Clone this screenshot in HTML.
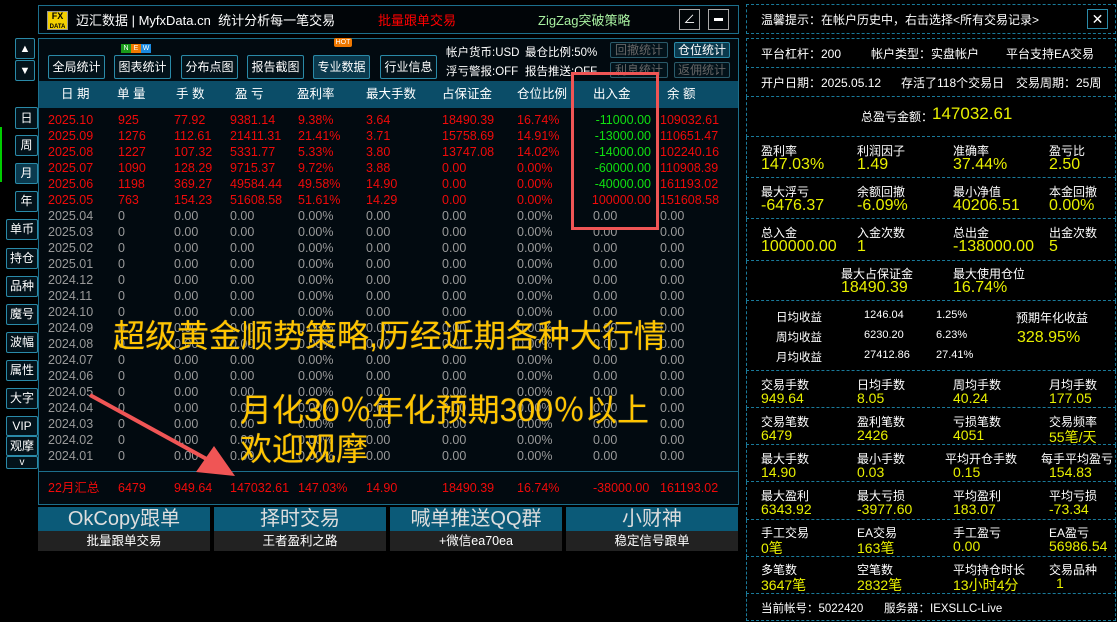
<!DOCTYPE html>
<html><head><meta charset="utf-8">
<style>
*{margin:0;padding:0;box-sizing:border-box}
body{width:1117px;height:622px;background:#000;position:relative;overflow:hidden;font-family:"Liberation Sans","Noto Sans CJK SC",sans-serif;color:#fff}
.a{position:absolute;white-space:nowrap}
.bx{position:absolute;border:1px solid #1c6f8c;background:#020a10}
.btn{position:absolute;border:1px solid #2a8aa8;background:#03121a;color:#fff;font-size:12px;text-align:center;border-radius:2px}
.sb{position:absolute;border:1px solid #2a8aa8;background:#03121a;color:#fff;font-size:12px;text-align:center;border-radius:2px}
.r{position:absolute;left:0;width:700px;height:16px;font-size:12.5px;line-height:16px}
.r span{position:absolute}
.red{color:#f00a0a}.gr{color:#9a9a9a}.grn{color:#10e010}
.c1{left:10px}.c2{left:80px}.c3{left:136px}.c4{left:192px}.c5{left:260px}.c6{left:328px}.c7{left:404px}.c8{left:479px}.c9{right:87px}.c9g{left:555px}.c10{left:622px}
.rp{position:absolute;left:746px;width:370px;border-left:1px dashed #1a7a9a;border-right:1px dashed #1a7a9a;border-bottom:1px dashed #1a7a9a}
.lb{position:absolute;font-size:12px;color:#fff}
.vl{position:absolute;font-size:16px;color:#e8f000}
.bb{position:absolute;top:507px;width:172px;height:44px}
.bb .t{height:24px;background:#0b5a78;color:#ddd;font-size:20px;line-height:24px;text-align:center}
.bb .s{height:20px;background:#222;color:#fff;font-size:12.5px;line-height:20px;text-align:center}
.ov{position:absolute;color:#ffc400;white-space:nowrap;text-shadow:0 0 1px #664}
</style></head><body>

<!-- top bar -->
<div class="bx" style="left:38px;top:5px;width:701px;height:29px;background:#010508"></div>
<div class="a" style="left:47px;top:11px;width:21px;height:19px;background:#f4d000;border:1px solid #999;color:#000;font-size:9px;font-weight:bold;line-height:9px;text-align:center">FX<br><span style="font-size:6px">DATA</span></div>
<div class="a" style="left:76px;top:10px;font-size:13px">迈汇数据 | MyfxData.cn&nbsp; 统计分析每一笔交易</div>
<div class="a" style="left:378px;top:10px;font-size:13px;color:#f00">批量跟单交易</div>
<div class="a" style="left:538px;top:10px;font-size:13px;color:#a8f0a0">ZigZag突破策略</div>
<div class="a" style="left:679px;top:9px;width:21px;height:21px;border:1px solid #aaa;font-size:12px;text-align:center;line-height:19px">∠</div>
<div class="a" style="left:708px;top:9px;width:21px;height:21px;border:1px solid #aaa"><div style="margin:8px 5px;height:3px;background:#fff"></div></div>

<!-- up/down -->
<div class="sb" style="left:15px;top:38px;width:20px;height:21px;line-height:21px;font-size:11px">▲</div>
<div class="sb" style="left:15px;top:60px;width:20px;height:21px;line-height:21px;font-size:11px">▼</div>

<!-- toolbar -->
<div class="bx" style="left:38px;top:38px;width:701px;height:467px"></div>
<div class="btn" style="left:48px;top:55px;width:57px;height:24px;line-height:22px">全局统计</div>
<div class="btn" style="left:114px;top:55px;width:57px;height:24px;line-height:22px">图表统计</div>
<div class="a" style="left:121px;top:44px;width:10px;height:9px;background:#1a9a1a;font-size:7px;text-align:center;line-height:9px">N</div>
<div class="a" style="left:131px;top:44px;width:10px;height:9px;background:#f07800;font-size:7px;text-align:center;line-height:9px">E</div>
<div class="a" style="left:141px;top:44px;width:10px;height:9px;background:#1a8ae0;font-size:7px;text-align:center;line-height:9px">W</div>
<div class="btn" style="left:181px;top:55px;width:57px;height:24px;line-height:22px">分布点图</div>
<div class="btn" style="left:247px;top:55px;width:57px;height:24px;line-height:22px">报告截图</div>
<div class="btn" style="left:313px;top:55px;width:57px;height:24px;line-height:22px;background:#0b3a4e">专业数据</div>
<div class="a" style="left:334px;top:38px;width:18px;height:9px;background:#f07800;font-size:7px;text-align:center;line-height:9px;border-radius:2px">HOT</div>
<div class="btn" style="left:380px;top:55px;width:57px;height:24px;line-height:22px">行业信息</div>
<div class="a" style="left:446px;top:44px;font-size:11.5px">帐户货币:USD</div>
<div class="a" style="left:525px;top:44px;font-size:11.5px">最仓比例:50%</div>
<div class="a" style="left:446px;top:63px;font-size:11.5px">浮亏警报:OFF</div>
<div class="a" style="left:525px;top:63px;font-size:11.5px">报告推送:OFF</div>
<div class="btn" style="left:610px;top:42px;width:58px;height:16px;line-height:14px;color:#666;border-color:#2a5a6a">回撤统计</div>
<div class="btn" style="left:674px;top:42px;width:56px;height:16px;line-height:14px;background:#0b3a4e">仓位统计</div>
<div class="btn" style="left:610px;top:62px;width:58px;height:16px;line-height:14px;color:#666;border-color:#2a5a6a">利息统计</div>
<div class="btn" style="left:674px;top:62px;width:56px;height:16px;line-height:14px;color:#666;border-color:#2a5a6a">返佣统计</div>

<!-- header -->
<div class="a" style="left:39px;top:81px;width:699px;height:27px;background:#0b4d68"></div>
<div class="a" style="left:39px;top:81px;width:699px;height:27px;font-size:12.5px;line-height:27px">
<span class="a" style="left:22px">日 期</span><span class="a" style="left:78px">单 量</span><span class="a" style="left:137px">手 数</span><span class="a" style="left:196px">盈 亏</span><span class="a" style="left:258px">盈利率</span><span class="a" style="left:327px">最大手数</span><span class="a" style="left:403px">占保证金</span><span class="a" style="left:478px">仓位比例</span><span class="a" style="left:554px">出入金</span><span class="a" style="left:628px">余 额</span></div>

<!-- rows -->
<div class="a" style="left:38px;top:112px;width:700px;height:360px">
<div class="r red" style="top:0"><span class="c1">2025.10</span><span class="c2">925</span><span class="c3">77.92</span><span class="c4">9381.14</span><span class="c5">9.38%</span><span class="c6">3.64</span><span class="c7">18490.39</span><span class="c8">16.74%</span><span class="c9 grn">-11000.00</span><span class="c10">109032.61</span></div>
<div class="r red" style="top:16px"><span class="c1">2025.09</span><span class="c2">1276</span><span class="c3">112.61</span><span class="c4">21411.31</span><span class="c5">21.41%</span><span class="c6">3.71</span><span class="c7">15758.69</span><span class="c8">14.91%</span><span class="c9 grn">-13000.00</span><span class="c10">110651.47</span></div>
<div class="r red" style="top:32px"><span class="c1">2025.08</span><span class="c2">1227</span><span class="c3">107.32</span><span class="c4">5331.77</span><span class="c5">5.33%</span><span class="c6">3.80</span><span class="c7">13747.08</span><span class="c8">14.02%</span><span class="c9 grn">-14000.00</span><span class="c10">102240.16</span></div>
<div class="r red" style="top:48px"><span class="c1">2025.07</span><span class="c2">1090</span><span class="c3">128.29</span><span class="c4">9715.37</span><span class="c5">9.72%</span><span class="c6">3.88</span><span class="c7">0.00</span><span class="c8">0.00%</span><span class="c9 grn">-60000.00</span><span class="c10">110908.39</span></div>
<div class="r red" style="top:64px"><span class="c1">2025.06</span><span class="c2">1198</span><span class="c3">369.27</span><span class="c4">49584.44</span><span class="c5">49.58%</span><span class="c6">14.90</span><span class="c7">0.00</span><span class="c8">0.00%</span><span class="c9 grn">-40000.00</span><span class="c10">161193.02</span></div>
<div class="r red" style="top:80px"><span class="c1">2025.05</span><span class="c2">763</span><span class="c3">154.23</span><span class="c4">51608.58</span><span class="c5">51.61%</span><span class="c6">14.29</span><span class="c7">0.00</span><span class="c8">0.00%</span><span class="c9">100000.00</span><span class="c10">151608.58</span></div>
<div class="r gr" style="top:96px"><span class="c1">2025.04</span><span class="c2">0</span><span class="c3">0.00</span><span class="c4">0.00</span><span class="c5">0.00%</span><span class="c6">0.00</span><span class="c7">0.00</span><span class="c8">0.00%</span><span class="c9g">0.00</span><span class="c10">0.00</span></div>
<div class="r gr" style="top:112px"><span class="c1">2025.03</span><span class="c2">0</span><span class="c3">0.00</span><span class="c4">0.00</span><span class="c5">0.00%</span><span class="c6">0.00</span><span class="c7">0.00</span><span class="c8">0.00%</span><span class="c9g">0.00</span><span class="c10">0.00</span></div>
<div class="r gr" style="top:128px"><span class="c1">2025.02</span><span class="c2">0</span><span class="c3">0.00</span><span class="c4">0.00</span><span class="c5">0.00%</span><span class="c6">0.00</span><span class="c7">0.00</span><span class="c8">0.00%</span><span class="c9g">0.00</span><span class="c10">0.00</span></div>
<div class="r gr" style="top:144px"><span class="c1">2025.01</span><span class="c2">0</span><span class="c3">0.00</span><span class="c4">0.00</span><span class="c5">0.00%</span><span class="c6">0.00</span><span class="c7">0.00</span><span class="c8">0.00%</span><span class="c9g">0.00</span><span class="c10">0.00</span></div>
<div class="r gr" style="top:160px"><span class="c1">2024.12</span><span class="c2">0</span><span class="c3">0.00</span><span class="c4">0.00</span><span class="c5">0.00%</span><span class="c6">0.00</span><span class="c7">0.00</span><span class="c8">0.00%</span><span class="c9g">0.00</span><span class="c10">0.00</span></div>
<div class="r gr" style="top:176px"><span class="c1">2024.11</span><span class="c2">0</span><span class="c3">0.00</span><span class="c4">0.00</span><span class="c5">0.00%</span><span class="c6">0.00</span><span class="c7">0.00</span><span class="c8">0.00%</span><span class="c9g">0.00</span><span class="c10">0.00</span></div>
<div class="r gr" style="top:192px"><span class="c1">2024.10</span><span class="c2">0</span><span class="c3">0.00</span><span class="c4">0.00</span><span class="c5">0.00%</span><span class="c6">0.00</span><span class="c7">0.00</span><span class="c8">0.00%</span><span class="c9g">0.00</span><span class="c10">0.00</span></div>
<div class="r gr" style="top:208px"><span class="c1">2024.09</span><span class="c2">0</span><span class="c3">0.00</span><span class="c4">0.00</span><span class="c5">0.00%</span><span class="c6">0.00</span><span class="c7">0.00</span><span class="c8">0.00%</span><span class="c9g">0.00</span><span class="c10">0.00</span></div>
<div class="r gr" style="top:224px"><span class="c1">2024.08</span><span class="c2">0</span><span class="c3">0.00</span><span class="c4">0.00</span><span class="c5">0.00%</span><span class="c6">0.00</span><span class="c7">0.00</span><span class="c8">0.00%</span><span class="c9g">0.00</span><span class="c10">0.00</span></div>
<div class="r gr" style="top:240px"><span class="c1">2024.07</span><span class="c2">0</span><span class="c3">0.00</span><span class="c4">0.00</span><span class="c5">0.00%</span><span class="c6">0.00</span><span class="c7">0.00</span><span class="c8">0.00%</span><span class="c9g">0.00</span><span class="c10">0.00</span></div>
<div class="r gr" style="top:256px"><span class="c1">2024.06</span><span class="c2">0</span><span class="c3">0.00</span><span class="c4">0.00</span><span class="c5">0.00%</span><span class="c6">0.00</span><span class="c7">0.00</span><span class="c8">0.00%</span><span class="c9g">0.00</span><span class="c10">0.00</span></div>
<div class="r gr" style="top:272px"><span class="c1">2024.05</span><span class="c2">0</span><span class="c3">0.00</span><span class="c4">0.00</span><span class="c5">0.00%</span><span class="c6">0.00</span><span class="c7">0.00</span><span class="c8">0.00%</span><span class="c9g">0.00</span><span class="c10">0.00</span></div>
<div class="r gr" style="top:288px"><span class="c1">2024.04</span><span class="c2">0</span><span class="c3">0.00</span><span class="c4">0.00</span><span class="c5">0.00%</span><span class="c6">0.00</span><span class="c7">0.00</span><span class="c8">0.00%</span><span class="c9g">0.00</span><span class="c10">0.00</span></div>
<div class="r gr" style="top:304px"><span class="c1">2024.03</span><span class="c2">0</span><span class="c3">0.00</span><span class="c4">0.00</span><span class="c5">0.00%</span><span class="c6">0.00</span><span class="c7">0.00</span><span class="c8">0.00%</span><span class="c9g">0.00</span><span class="c10">0.00</span></div>
<div class="r gr" style="top:320px"><span class="c1">2024.02</span><span class="c2">0</span><span class="c3">0.00</span><span class="c4">0.00</span><span class="c5">0.00%</span><span class="c6">0.00</span><span class="c7">0.00</span><span class="c8">0.00%</span><span class="c9g">0.00</span><span class="c10">0.00</span></div>
<div class="r gr" style="top:336px"><span class="c1">2024.01</span><span class="c2">0</span><span class="c3">0.00</span><span class="c4">0.00</span><span class="c5">0.00%</span><span class="c6">0.00</span><span class="c7">0.00</span><span class="c8">0.00%</span><span class="c9g">0.00</span><span class="c10">0.00</span></div>
</div>
<div class="a" style="left:39px;top:471px;width:699px;height:1px;background:#1c6f8c"></div>
<div class="r red" style="left:38px;top:480px"><span class="c1">22月汇总</span><span style="left:80px">6479</span><span style="left:136px">949.64</span><span style="left:192px">147032.61</span><span style="left:260px">147.03%</span><span style="left:328px">14.90</span><span style="left:404px">18490.39</span><span style="left:479px">16.74%</span><span style="left:555px">-38000.00</span><span style="left:622px">161193.02</span></div>

<!-- red rect -->
<div class="a" style="left:571px;top:72px;width:88px;height:158px;border:3px solid #f05555"></div>

<!-- sidebar -->
<div class="sb" style="left:15px;top:107px;width:23px;height:22px;line-height:20px">日</div>
<div class="sb" style="left:15px;top:135px;width:23px;height:21px;line-height:19px">周</div>
<div class="sb" style="left:15px;top:163px;width:23px;height:21px;line-height:19px;background:#0b3a4e">月</div>
<div class="sb" style="left:15px;top:191px;width:23px;height:21px;line-height:19px">年</div>
<div class="sb" style="left:6px;top:219px;width:32px;height:21px;line-height:19px">单币</div>
<div class="sb" style="left:6px;top:248px;width:32px;height:21px;line-height:19px">持仓</div>
<div class="sb" style="left:6px;top:276px;width:32px;height:21px;line-height:19px">品种</div>
<div class="sb" style="left:6px;top:304px;width:32px;height:21px;line-height:19px">魔号</div>
<div class="sb" style="left:6px;top:332px;width:32px;height:21px;line-height:19px">波幅</div>
<div class="sb" style="left:6px;top:360px;width:32px;height:21px;line-height:19px">属性</div>
<div class="sb" style="left:6px;top:388px;width:32px;height:21px;line-height:19px">大字</div>
<div class="sb" style="left:6px;top:416px;width:32px;height:20px;line-height:18px">VIP</div>
<div class="sb" style="left:6px;top:436px;width:32px;height:20px;line-height:18px">观摩</div>
<div class="sb" style="left:6px;top:456px;width:32px;height:13px;line-height:11px;font-size:10px">v</div>
<div class="a" style="left:0;top:127px;width:2px;height:55px;background:#0c0"></div>

<!-- overlays -->
<div class="ov" style="left:113px;top:311px;font-size:32px;letter-spacing:0">超级黄金顺势策略,历经近期各种大行情</div>
<div class="ov" style="left:240px;top:385px;font-size:32px">月化30％年化预期300％以上</div>
<div class="ov" style="left:240px;top:424px;font-size:32px">欢迎观摩</div>
<svg class="a" style="left:0;top:0" width="740" height="622"><line x1="90" y1="395" x2="212" y2="462" stroke="#f05555" stroke-width="4"/><polygon points="235,476 196,472 214,446" fill="#f05555"/></svg>

<!-- bottom buttons -->
<div class="bb" style="left:38px"><div class="t">OkCopy跟单</div><div class="s">批量跟单交易</div></div>
<div class="bb" style="left:214px"><div class="t">择时交易</div><div class="s">王者盈利之路</div></div>
<div class="bb" style="left:390px"><div class="t">喊单推送QQ群</div><div class="s">+微信ea70ea</div></div>
<div class="bb" style="left:566px"><div class="t">小财神</div><div class="s">稳定信号跟单</div></div>

<!-- right panel -->
<div class="rp" style="top:4px;height:30px;border-top:1px dashed #1a7a9a"></div>
<div class="lb" style="left:761px;top:11px">温馨提示：在帐户历史中，右击选择&lt;所有交易记录&gt;</div>
<div class="a" style="left:1087px;top:9px;width:21px;height:20px;border:1px solid #2a8aa8;text-align:center;line-height:18px;font-size:14px">✕</div>
<div class="rp" style="top:38px;height:30px;border-top:1px dashed #1a7a9a"></div>
<div class="lb" style="left:761px;top:45px">平台杠杆：200</div><div class="lb" style="left:871px;top:45px">帐户类型：实盘帐户</div><div class="lb" style="left:1006px;top:45px">平台支持EA交易</div>
<div class="rp" style="top:68px;height:29px"></div>
<div class="lb" style="left:761px;top:74px">开户日期：2025.05.12</div><div class="lb" style="left:901px;top:74px">存活了118个交易日</div><div class="lb" style="left:1016px;top:74px">交易周期：25周</div>
<div class="rp" style="top:97px;height:40px"></div>
<div class="lb" style="left:861px;top:108px">总盈亏金额：</div><div class="vl" style="left:932px;top:104px;font-size:17px">147032.61</div>
<div class="rp" style="top:137px;height:41px"></div>
<div class="rp" style="top:178px;height:41px"></div>
<div class="rp" style="top:219px;height:42px"></div>
<div class="rp" style="top:261px;height:40px"></div>
<div class="lb" style="left:761px;top:142px">盈利率</div><div class="lb" style="left:857px;top:142px">利润因子</div><div class="lb" style="left:953px;top:142px">准确率</div><div class="lb" style="left:1049px;top:142px">盈亏比</div>
<div class="vl" style="left:761px;top:156px">147.03%</div><div class="vl" style="left:857px;top:156px">1.49</div><div class="vl" style="left:953px;top:156px">37.44%</div><div class="vl" style="left:1049px;top:156px">2.50</div>
<div class="lb" style="left:761px;top:183px">最大浮亏</div><div class="lb" style="left:857px;top:183px">余额回撤</div><div class="lb" style="left:953px;top:183px">最小净值</div><div class="lb" style="left:1049px;top:183px">本金回撤</div>
<div class="vl" style="left:761px;top:197px">-6476.37</div><div class="vl" style="left:857px;top:197px">-6.09%</div><div class="vl" style="left:953px;top:197px">40206.51</div><div class="vl" style="left:1049px;top:197px">0.00%</div>
<div class="lb" style="left:761px;top:224px">总入金</div><div class="lb" style="left:857px;top:224px">入金次数</div><div class="lb" style="left:953px;top:224px">总出金</div><div class="lb" style="left:1049px;top:224px">出金次数</div>
<div class="vl" style="left:761px;top:238px">100000.00</div><div class="vl" style="left:857px;top:238px">1</div><div class="vl" style="left:953px;top:238px">-138000.00</div><div class="vl" style="left:1049px;top:238px">5</div>
<div class="lb" style="left:841px;top:265px">最大占保证金</div><div class="lb" style="left:953px;top:265px">最大使用仓位</div>
<div class="vl" style="left:841px;top:279px">18490.39</div><div class="vl" style="left:953px;top:279px">16.74%</div>
<div class="rp" style="top:301px;height:70px"></div>
<div class="lb" style="left:776px;top:309px;font-size:11.5px">日均收益</div><div class="lb" style="left:864px;top:309px;font-size:11px">1246.04</div><div class="lb" style="left:936px;top:309px;font-size:11px">1.25%</div><div class="lb" style="left:1016px;top:309px">预期年化收益</div>
<div class="lb" style="left:776px;top:329px;font-size:11.5px">周均收益</div><div class="lb" style="left:864px;top:329px;font-size:11px">6230.20</div><div class="lb" style="left:936px;top:329px;font-size:11px">6.23%</div><div class="vl" style="left:1017px;top:329px">328.95%</div>
<div class="lb" style="left:776px;top:349px;font-size:11.5px">月均收益</div><div class="lb" style="left:864px;top:349px;font-size:11px">27412.86</div><div class="lb" style="left:936px;top:349px;font-size:11px">27.41%</div>
<div class="rp" style="top:371px;height:37px"></div>
<div class="rp" style="top:408px;height:37px"></div>
<div class="rp" style="top:445px;height:37px"></div>
<div class="rp" style="top:482px;height:38px"></div>
<div class="rp" style="top:520px;height:37px"></div>
<div class="rp" style="top:557px;height:37px"></div>
<div class="rp" style="top:594px;height:27px"></div>
<div class="lb" style="left:761px;top:376px">交易手数</div><div class="lb" style="left:857px;top:376px">日均手数</div><div class="lb" style="left:953px;top:376px">周均手数</div><div class="lb" style="left:1049px;top:376px">月均手数</div>
<div class="vl" style="left:761px;top:390px;font-size:14px">949.64</div><div class="vl" style="left:857px;top:390px;font-size:14px">8.05</div><div class="vl" style="left:953px;top:390px;font-size:14px">40.24</div><div class="vl" style="left:1049px;top:390px;font-size:14px">177.05</div>
<div class="lb" style="left:761px;top:413px">交易笔数</div><div class="lb" style="left:857px;top:413px">盈利笔数</div><div class="lb" style="left:953px;top:413px">亏损笔数</div><div class="lb" style="left:1049px;top:413px">交易频率</div>
<div class="vl" style="left:761px;top:427px;font-size:14px">6479</div><div class="vl" style="left:857px;top:427px;font-size:14px">2426</div><div class="vl" style="left:953px;top:427px;font-size:14px">4051</div><div class="vl" style="left:1049px;top:427px;font-size:14px">55笔/天</div>
<div class="lb" style="left:761px;top:450px">最大手数</div><div class="lb" style="left:857px;top:450px">最小手数</div><div class="lb" style="left:945px;top:450px">平均开仓手数</div><div class="lb" style="left:1041px;top:450px">每手平均盈亏</div>
<div class="vl" style="left:761px;top:464px;font-size:14px">14.90</div><div class="vl" style="left:857px;top:464px;font-size:14px">0.03</div><div class="vl" style="left:953px;top:464px;font-size:14px">0.15</div><div class="vl" style="left:1049px;top:464px;font-size:14px">154.83</div>
<div class="lb" style="left:761px;top:487px">最大盈利</div><div class="lb" style="left:857px;top:487px">最大亏损</div><div class="lb" style="left:953px;top:487px">平均盈利</div><div class="lb" style="left:1049px;top:487px">平均亏损</div>
<div class="vl" style="left:761px;top:501px;font-size:14px">6343.92</div><div class="vl" style="left:857px;top:501px;font-size:14px">-3977.60</div><div class="vl" style="left:953px;top:501px;font-size:14px">183.07</div><div class="vl" style="left:1049px;top:501px;font-size:14px">-73.34</div>
<div class="lb" style="left:761px;top:524px">手工交易</div><div class="lb" style="left:857px;top:524px">EA交易</div><div class="lb" style="left:953px;top:524px">手工盈亏</div><div class="lb" style="left:1049px;top:524px">EA盈亏</div>
<div class="vl" style="left:761px;top:538px;font-size:14px">0笔</div><div class="vl" style="left:857px;top:538px;font-size:14px">163笔</div><div class="vl" style="left:953px;top:538px;font-size:14px">0.00</div><div class="vl" style="left:1049px;top:538px;font-size:14px">56986.54</div>
<div class="lb" style="left:761px;top:561px">多笔数</div><div class="lb" style="left:857px;top:561px">空笔数</div><div class="lb" style="left:953px;top:561px">平均持仓时长</div><div class="lb" style="left:1049px;top:561px">交易品种</div>
<div class="vl" style="left:761px;top:575px;font-size:14px">3647笔</div><div class="vl" style="left:857px;top:575px;font-size:14px">2832笔</div><div class="vl" style="left:953px;top:575px;font-size:14px">13小时4分</div><div class="vl" style="left:1056px;top:575px;font-size:14px">1</div>
<div class="lb" style="left:761px;top:600px;font-size:11.5px">当前帐号：5022420</div><div class="lb" style="left:884px;top:600px;font-size:11.5px">服务器：IEXSLLC-Live</div>

</body></html>
